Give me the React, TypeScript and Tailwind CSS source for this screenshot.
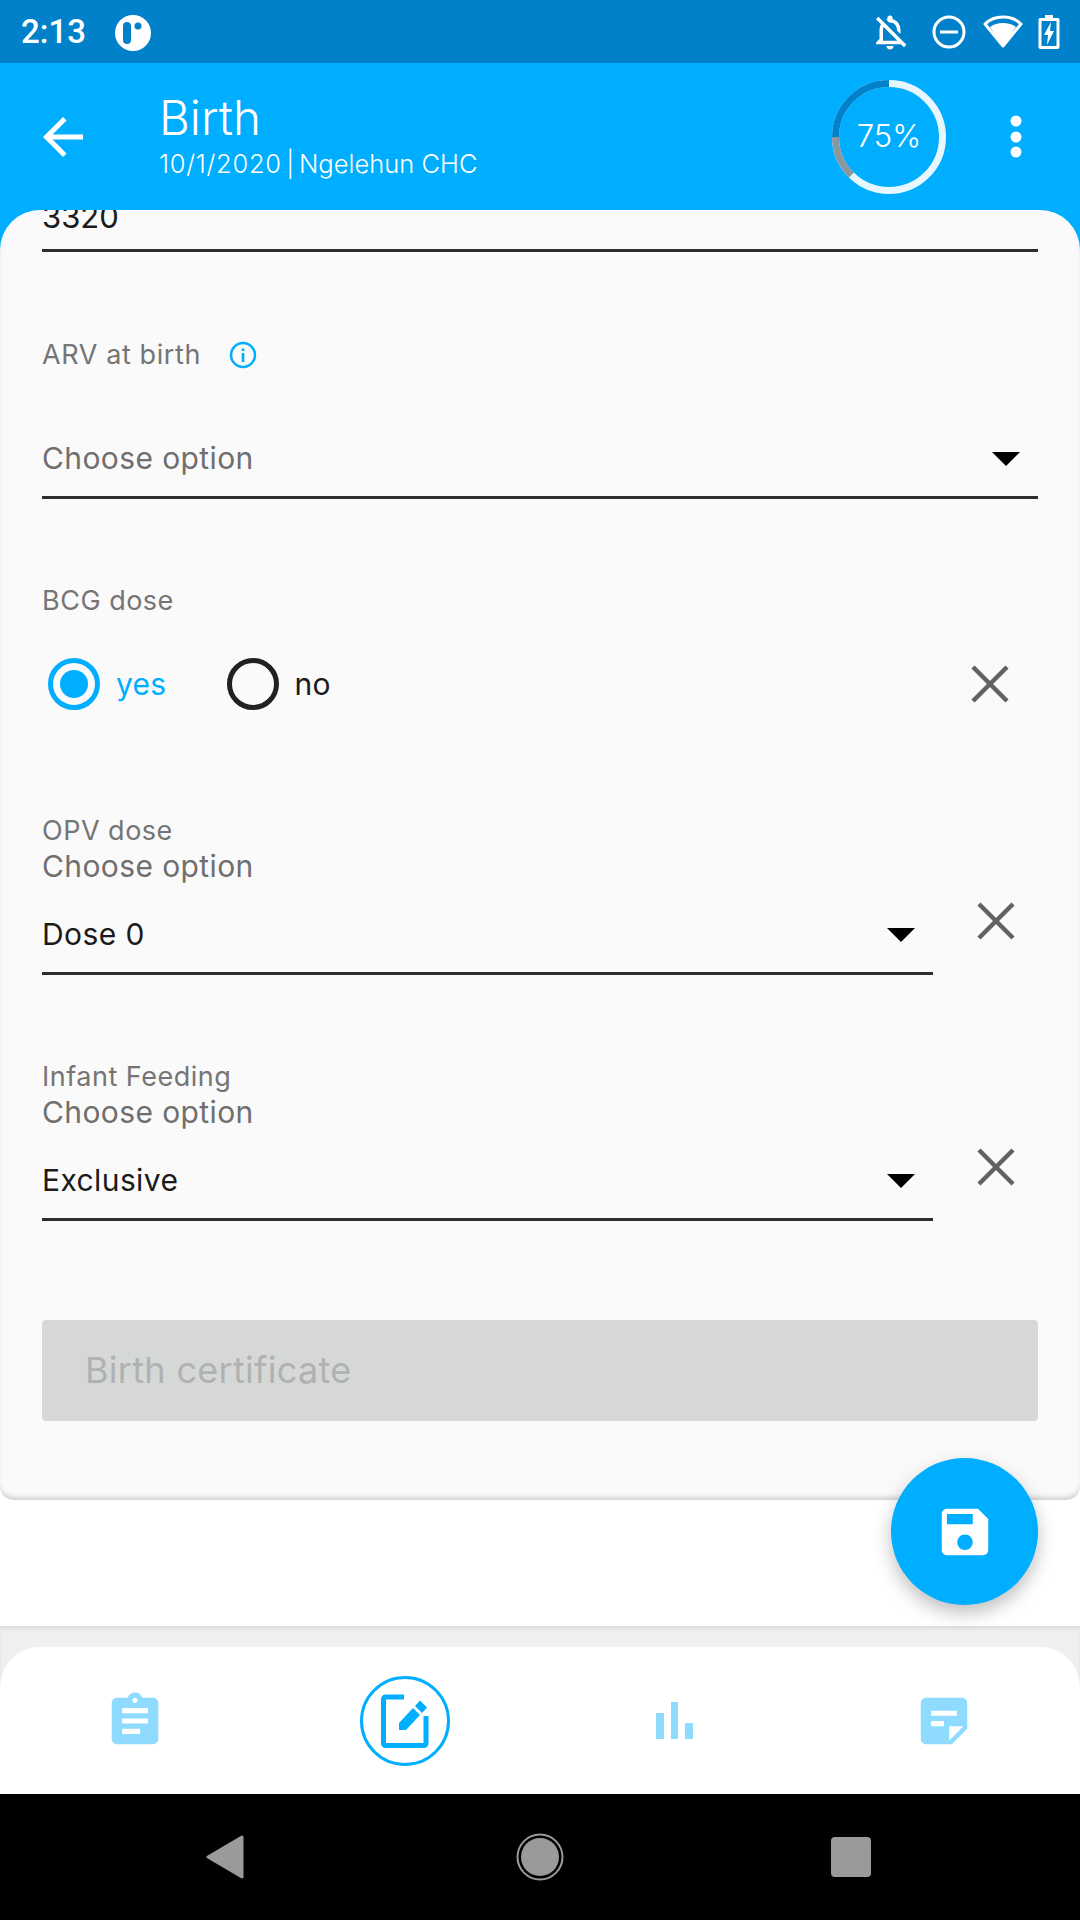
import { ReactNode } from "react";

const font = { fontFamily: "Inter, Roboto, sans-serif" };

function ClearIcon() {
  return (
    <svg width="38" height="38" viewBox="0 0 38 38" className="text-[#616161]">
      <path d="M2 2L36 36M36 2L2 36" stroke="currentColor" strokeWidth="4.5" fill="none" />
    </svg>
  );
}

function Caret() {
  return (
    <svg width="28" height="14" viewBox="0 0 28 14" className="mb-[10px]">
      <path d="M0 0H28L14 14Z" fill="#000" />
    </svg>
  );
}

function Select({ value }: { value: string }) {
  return (
    <div className="flex h-[90px] items-end justify-between border-b-[3px] border-[#2e2e2e] pb-[20px] pr-[18px]">
      <span className={`text-[30px] leading-[36px] tracking-[0.4px] ${value === "Choose option" ? "text-[#6f6f6f]" : "text-[#1b1b1b]"}`}>{value}</span>
      <Caret />
    </div>
  );
}

function DoseField({ label, value }: { label: string; value: string }) {
  return (
    <div className="flex items-start">
      <div className="w-[891px]">
        <div className="h-[34px] text-[27px] leading-[36px] tracking-[0.5px] text-[#757575]">{label}</div>
        <div className="h-[38px] text-[30px] leading-[38px] tracking-[0.4px] text-[#6f6f6f]">Choose option</div>
        <Select value={value} />
      </div>
      <div className="ml-[44px] mt-[89px]">
        <ClearIcon />
      </div>
    </div>
  );
}

function NavSlot({ children }: { children: ReactNode }) {
  return <div className="flex flex-1 items-center justify-center">{children}</div>;
}

export default function App() {
  return (
    <div className="flex h-[1920px] w-[1080px] flex-col overflow-hidden bg-white" style={font}>
      {/* status bar */}
      <div className="flex h-[63px] shrink-0 items-center bg-[#0081ca] pl-[21px] pr-[20px] text-white">
        <span className="text-[33px] font-medium" style={{ fontFamily: "Roboto, sans-serif" }}>2:13</span>
        <svg width="36" height="36" viewBox="0 0 36 36" className="ml-[29px] mt-[2px]">
          <circle cx="18" cy="18" r="18" fill="#fff" />
          <rect x="8" y="7" width="8" height="22" rx="4" fill="#0081ca" />
          <circle cx="23" cy="11" r="3.5" fill="#0081ca" />
        </svg>
        <div className="flex-1" />
        <svg width="42" height="42" viewBox="0 0 24 24" fill="#fff">
          <path d="M12 22c1.1 0 2-.9 2-2h-4c0 1.1.9 2 2 2zm0-15.500c2.490 0 4 2.020 4 4.500v.1l2 2V11c0-3.070-1.630-5.640-4.500-6.320V4c0-.83-.67-1.500-1.500-1.500s-1.500.67-1.500 1.500v.68c-.24.06-.47.15-.69.23l1.640 1.640c.18-.02.36-.05.55-.05zM5.410 3.350L4 4.760l2.810 2.810C6.290 8.570 6 9.730 6 11v5l-2 2v1h14.240l1.740 1.740 1.410-1.410L5.410 3.350zM16 17H8v-6c0-.68.12-1.320.34-1.900L16 16.760V17z" />
        </svg>
        <svg width="36" height="36" viewBox="0 0 36 36" className="ml-[20px]">
          <circle cx="18" cy="18" r="15" stroke="#fff" strokeWidth="3" fill="none" />
          <rect x="9" y="16.500" width="18" height="3" fill="#fff" />
        </svg>
        <svg width="42" height="36" viewBox="0 0 42 36" className="ml-[15px]">
          <path d="M21 32L3 10C8 5 14 3 21 3s13 2 18 7Z" fill="none" stroke="#fff" strokeWidth="3" strokeLinejoin="round" />
          <path d="M21 32L8 13C12 10 16 9 21 9s9 1 13 4Z" fill="#fff" />
        </svg>
        <svg width="22" height="36" viewBox="0 0 22 36" className="ml-[14px]">
          <path d="M7 1h8v3h5a1.500 1.500 0 0 1 1.500 1.500V33a2 2 0 0 1-2 2H2.500a2 2 0 0 1-2-2V5.500A1.500 1.500 0 0 1 2 4h5Z" fill="#fff" />
          <rect x="3.500" y="7" width="15" height="25" fill="#0081ca" />
          <path d="M13 8L6 21h4l-1 10 7-14h-4Z" fill="#fff" />
        </svg>
      </div>

      {/* app bar */}
      <div className="flex h-[147px] shrink-0 items-center bg-[#00aeff] pl-[33px] pr-[56px] text-white">
        <svg width="60" height="60" viewBox="0 0 24 24" fill="#fff">
          <path d="M20 11H7.830l5.590-5.590L12 4l-8 8 8 8 1.410-1.410L7.830 13H20v-2z" />
        </svg>
        <div className="ml-[66px] flex-1">
          <div className="text-[47.5px] leading-[54px] font-light">Birth</div>
          <div className="text-[25.5px] leading-[38px] font-light">
            <span className="tracking-[0.7px]">10/1/2020</span>
            <span className="-mx-[2.5px] inline-block">&nbsp;|&nbsp;</span>
            Ngelehun CHC
          </div>
        </div>
        <div className="relative h-[114px] w-[114px]">
          <svg width="114" height="114" viewBox="0 0 114 114" className="absolute inset-0">
            <circle cx="57" cy="57" r="53.500" fill="none" stroke="#e6f7ff" strokeWidth="7" />
            <path d="M57 3.500A53.500 53.500 0 0 0 3.500 57" fill="none" stroke="#0081ca" strokeWidth="7" />
            <path d="M3.500 57A53.500 53.500 0 0 0 19.500 95" fill="none" stroke="#8b979f" strokeWidth="7" />
          </svg>
          <div className="absolute inset-0 flex items-center justify-center text-[31px] font-light">75%</div>
        </div>
        <svg width="16" height="48" viewBox="0 0 16 48" className="ml-[62px]">
          <circle cx="8" cy="8" r="5.500" fill="#fff" />
          <circle cx="8" cy="24" r="5.500" fill="#fff" />
          <circle cx="8" cy="39" r="5.500" fill="#fff" />
        </svg>
      </div>

      {/* form card */}
      <div className="relative bg-gradient-to-b from-[#00aeff] from-50% to-white to-50%">
        <div className="flex h-[1290px] flex-col overflow-hidden rounded-t-[40px] rounded-b-[14px] bg-[#fafafa] px-[42px] shadow-[inset_0_-5px_5px_-2px_rgba(0,0,0,0.16)]">
          <div className="-mt-[14px] flex h-[56px] shrink-0 items-center border-b-[3px] border-[#2e2e2e] pb-[10px] text-[31px] text-[#1b1b1b]">3320</div>

          <div className="mt-[86px] flex h-[34px] items-center gap-[28px] text-[27px] tracking-[0.6px] text-[#757575]">
            ARV at birth
            <svg width="28" height="28" viewBox="0 0 28 28">
              <circle cx="14" cy="14" r="12" fill="none" stroke="#00aeff" strokeWidth="2.500" />
              <rect x="12.700" y="12" width="2.600" height="9" fill="#00aeff" />
              <rect x="12.700" y="7.500" width="2.600" height="2.600" fill="#00aeff" />
            </svg>
          </div>
          <div className="mt-[37px]">
            <Select value="Choose option" />
          </div>

          <div className="mt-[84px] h-[34px] text-[27px] leading-[36px] tracking-[0.5px] text-[#757575]">BCG dose</div>
          <div className="mt-[41px] flex h-[52px] items-center pl-[6px]">
            <div className="flex h-[52px] w-[52px] items-center justify-center rounded-full border-[5px] border-[#00aeff]">
              <div className="h-[28px] w-[28px] rounded-full bg-[#00aeff]" />
            </div>
            <span className="ml-[16px] text-[30px] tracking-[0.3px] text-[#00aeff]">yes</span>
            <div className="ml-[60px] h-[52px] w-[52px] rounded-full border-[5px] border-[#212121]" />
            <span className="ml-[16px] text-[30px] tracking-[0.3px] text-[#1b1b1b]">no</span>
            <div className="ml-auto mr-[29px]">
              <ClearIcon />
            </div>
          </div>

          <div className="mt-[103px]">
            <DoseField label="OPV dose" value="Dose 0" />
          </div>
          <div className="mt-[84px]">
            <DoseField label="Infant Feeding" value="Exclusive" />
          </div>

          <div className="mt-[99px] flex h-[101px] shrink-0 items-center rounded-[4px] bg-[#d6d8d7] pb-[2px] pl-[43px] text-[36px] tracking-[0.3px] text-[#b0b2b1]">
            Birth certificate
          </div>
        </div>

        {/* save button */}
        <div className="absolute right-[42px] top-[1248px] z-10 flex h-[147px] w-[147px] items-center justify-center rounded-full bg-[#00aeff] shadow-[0_8px_18px_rgba(0,0,0,0.25)]">
          <svg width="62" height="62" viewBox="0 0 24 24" fill="#fff">
            <path d="M17 3H5c-1.110 0-2 .9-2 2v14c0 1.100.89 2 2 2h14c1.100 0 2-.9 2-2V7l-4-4zm-5 16c-1.660 0-3-1.340-3-3s1.340-3 3-3 3 1.340 3 3-1.340 3-3 3zm3-10H5V5h10v4z" />
          </svg>
        </div>
      </div>

      <div className="h-[126px] shrink-0 bg-white" />

      {/* bottom nav */}
      <div className="shrink-0 bg-[#eff1f1] pt-[21px] shadow-[inset_0_3px_3px_rgba(0,0,0,0.08)]">
        <div className="flex h-[147px] items-center rounded-t-[40px] bg-white">
          <NavSlot>
            <svg width="62" height="62" viewBox="0 0 24 24" fill="#8fdbff">
              <path d="M19 3h-4.180C14.400 1.840 13.300 1 12 1c-1.300 0-2.400.84-2.820 2H5c-1.100 0-2 .9-2 2v14c0 1.100.9 2 2 2h14c1.100 0 2-.9 2-2V5c0-1.100-.9-2-2-2zm-7 0c.55 0 1 .45 1 1s-.45 1-1 1-1-.45-1-1 .45-1 1-1zm2 14H7v-2h7v2zm3-4H7v-2h10v2zm0-4H7V7h10v2z" />
            </svg>
          </NavSlot>
          <NavSlot>
            <div className="flex h-[90px] w-[90px] items-center justify-center rounded-full border-[3px] border-[#00aeff]">
              <svg width="48" height="54" viewBox="0 0 48 54">
                <path d="M23 3H4.500A2 2 0 0 0 2.500 5V49.500A2 2 0 0 0 4.500 51.500H43A2 2 0 0 0 45 49.500V22" fill="none" stroke="#00aeff" strokeWidth="5" />
                <path d="M18 29v7h7L39 21l-7-7Z" fill="#00aeff" />
                <path d="M34 12l7 7 5-5.500-7-7Z" fill="#00aeff" />
              </svg>
            </div>
          </NavSlot>
          <NavSlot>
            <svg width="38" height="38" viewBox="0 0 38 38" fill="#8fdbff">
              <rect x="0" y="11" width="8" height="26" />
              <rect x="15" y="0" width="7" height="37" />
              <rect x="29" y="21" width="8" height="16" />
            </svg>
          </NavSlot>
          <NavSlot>
            <svg width="62" height="62" viewBox="0 0 24 24" fill="#8fdbff" className="-ml-[2px]">
              <path d="M19 3H4.990C3.890 3 3 3.900 3 5l.01 14c0 1.100.89 2 1.990 2h10l6-6V5c0-1.100-.9-2-2-2zM7 8h10v2H7V8zm5 6H7v-2h5v2zm2 5.500V14h5.500L14 19.500z" />
            </svg>
          </NavSlot>
        </div>
      </div>

      {/* android nav bar */}
      <div className="flex flex-1 items-center bg-black">
        <NavSlot>
          <svg width="38" height="44" viewBox="0 0 38 44" className="ml-[90px]">
            <path d="M36 2L2 22L36 42Z" fill="#9a9a9a" stroke="#9a9a9a" strokeWidth="3" strokeLinejoin="round" />
          </svg>
        </NavSlot>
        <NavSlot>
          <svg width="48" height="48" viewBox="0 0 48 48">
            <circle cx="24" cy="24" r="22.500" fill="none" stroke="#9a9a9a" strokeWidth="2" />
            <circle cx="24" cy="24" r="19" fill="#9a9a9a" />
          </svg>
        </NavSlot>
        <NavSlot>
          <div className="mr-[98px] h-[40px] w-[40px] rounded-[4px] bg-[#9a9a9a]" />
        </NavSlot>
      </div>
    </div>
  );
}
